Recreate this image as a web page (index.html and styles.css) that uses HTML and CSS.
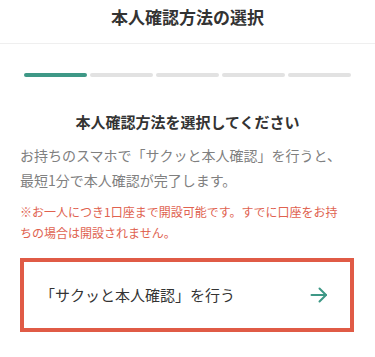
FILE: index.html
```html
<!DOCTYPE html>
<html lang="ja">
<head>
<meta charset="utf-8">
<link rel="stylesheet" href="styles.css">
</head>
<body>
<header class="header">
  <h1 class="title">本人確認方法の選択</h1>
</header>
<main class="content">
  <div class="progress">
    <span class="seg active"></span>
    <span class="seg"></span>
    <span class="seg"></span>
    <span class="seg"></span>
    <span class="seg"></span>
  </div>
  <h2 class="heading">本人確認方法を選択してください</h2>
  <p class="desc">お持ちのスマホで「サクッと本人確認」を行うと、<br>最短1分で本人確認が完了します。</p>
  <p class="note">※お一人につき1口座まで開設可能です。すでに口座をお持<br>ちの場合は開設されません。</p>
  <a class="option" href="#">
    <span class="option-label">「サクッと本人確認」を行う</span>
    <svg class="arrow" width="18" height="16" viewBox="0 0 18 16" fill="none" stroke="currentColor" stroke-width="2" stroke-linecap="round" stroke-linejoin="round">
      <path d="M1.5 8H16"/>
      <path d="M9.5 1.5L16 8L9.5 14.5"/>
    </svg>
  </a>
</main>
</body>
</html>
```

FILE: styles.css
```css
* { box-sizing: border-box; }
html, body {
  margin: 0;
  padding: 0;
  background: #fff;
}
body {
  width: 375px;
  height: 357px;
  overflow: hidden;
  font-family: "Noto Sans CJK JP", "Noto Sans", sans-serif;
  color: #333;
}
.header {
  height: 44px;
  border-bottom: 1px solid #efefef;
}
.title {
  margin: 0;
  font-size: 17px;
  line-height: 34px;
  font-weight: 700;
  text-align: center;
  color: #333;
}
.content {
  padding: 29px 20px 0;
}
.progress {
  display: flex;
  gap: 3px;
  padding: 0 4px 0 4px;
}
.seg {
  flex: 1;
  height: 4px;
  border-radius: 2px;
  background: #e2e2e2;
}
.seg.active {
  background: #3e9886;
}
.heading {
  margin: 34px 0 0;
  font-size: 15px;
  line-height: 22px;
  font-weight: 700;
  text-align: center;
  color: #333;
}
.desc {
  margin: 10px 0 0;
  font-size: 14px;
  line-height: 25px;
  color: #808080;
}
.note {
  margin: 8px 0 0;
  font-size: 12px;
  line-height: 21px;
  color: #e0624f;
}
.option {
  margin-top: 15px;
  height: 74px;
  width: 334px;
  border: 4px solid #e05b46;
  display: flex;
  align-items: center;
  justify-content: space-between;
  padding: 0 22px 0 16px;
  text-decoration: none;
  color: #333;
}
.option-label {
  font-size: 15px;
  line-height: 22px;
}
.arrow {
  color: #3e9886;
  display: block;
}
```
